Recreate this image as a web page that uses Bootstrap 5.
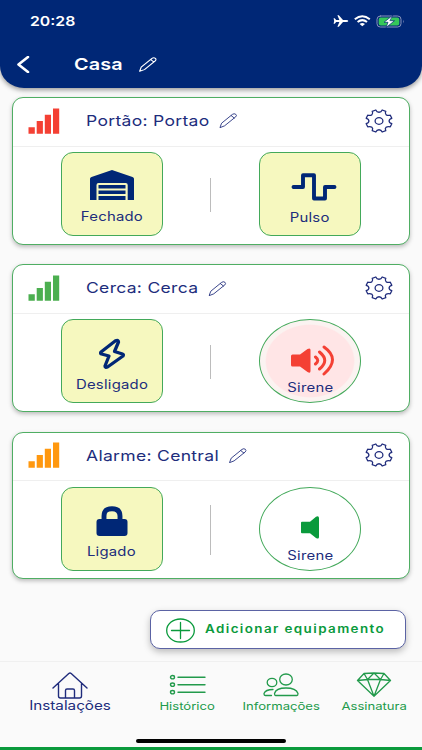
<!DOCTYPE html>
<html lang="pt-BR">
<head>
<meta charset="utf-8">
<meta name="viewport" content="width=device-width, initial-scale=1">
<title>Casa</title>
<link href="https://cdn.jsdelivr.net/npm/bootstrap@5.3.0/dist/css/bootstrap.min.css" rel="stylesheet">
<style>
:root{--navy:#002776;--ink:#202c7c;--green:#0a9a3c}
body{font-family:Inter,"Liberation Sans",sans-serif;background:#fafafa;color:var(--ink);line-height:1.2}
svg{display:block;flex:none;fill:none;stroke:currentColor;stroke-linecap:round;stroke-linejoin:round}
.screen{width:422px;height:750px}
.topbar{height:87.5px;background:var(--navy);border-radius:0 0 24px 24px/0 0 22px 22px;box-shadow:0 2px 5px rgba(0,0,0,.4)}
.status{height:42px;padding:0 17px 0 30px}
.clock{font-size:13.5px;font-weight:600;transform:scaleX(1.17)!important}
.wide{display:inline-block;transform:scaleX(1.2);transform-origin:left center;white-space:nowrap}
.mid{transform-origin:center}
.titlebar{height:44px;padding-left:16px}
.place{font-size:16.5px;font-weight:600;letter-spacing:.15px;margin-left:44px;padding-top:1px}
.gap-place{gap:13px}
.list{padding:9.5px 12.5px 0 12px;gap:19.8px}
.device{height:147.5px;border:1.2px solid #4fae63;border-radius:11px;background:#fff;box-shadow:0 2px 4px rgba(0,0,0,.25)}
.device-head{height:48.5px;border-bottom:1px solid #efefef;padding:0 15.5px 2px 15px}
.name{font-size:14.6px;letter-spacing:.26px;margin-left:26px;padding-top:2px}
.name svg{margin-top:-2px}
.gap-pen{gap:8.5px}
.body-row{padding-top:5.5px}
.tile{width:102px;height:84px;border:1.2px solid #43a95a;border-radius:12px;background:#f6f8bf;font-size:12.4px;letter-spacing:.2px}
.tile svg{color:var(--navy)}
.siren{border-radius:50%;background:#fff}
.siren.on{background:radial-gradient(closest-side,#ffe5e6 0 87%,#fbf3f1 90% 100%)}
.tile.on svg{color:#f44034}.tile.off svg{color:var(--green)}
.glyph{height:53.500px;padding-top:2px}
.bolt,.lock{padding-top:13px}
.glyph.garage{height:52.500px;padding-top:12px}
.glyph.pulse{height:53px;padding-top:14.500px}
.pulse + span{padding-top:1px}
.on .glyph{height:55.500px;padding-left:6px}
.on .glyph + span{margin-top:5.500px;padding-left:1px}
.off .glyph{height:53px;padding-bottom:1.500px}
.off .glyph + span{padding-left:1px}
.sep{width:1.3px;height:34px;background:#bcbcbc;margin-top:1.500px}
.sep.tall{height:50px;margin:0 0 -2px}
.add{width:255.5px;height:39px;margin:31px 16.5px 0 auto;border:1.3px solid #5b63a4;border-radius:10px;background:#fff;color:var(--green);box-shadow:0 3px 7px rgba(0,0,0,.25);padding:1px 0 0 14.5px}
.add .wide{font-size:11.2px;font-weight:600;letter-spacing:1.16px;margin-left:10px}
.tabs{height:88.5px;border-top:1.5px solid #f0f0f0;margin-top:12px;border-bottom:3px solid var(--green);color:#229a4b;position:relative;padding-top:10px}
.tabs>a{color:inherit;text-decoration:none;font-size:10.9px}
.tabs>a>.mid{padding-top:3px}
.tabs>a.here{color:var(--ink);font-size:12.7px}
.tabs>a.here>.mid{padding-top:0;margin-top:-1px}
.t1{width:140px}.t2{width:95px}.t3{width:92px}.t4{width:94px}
.homebar{position:absolute;left:136px;bottom:3.5px;width:150px;height:4.5px;border-radius:3px;background:#000}
</style>
<script src="https://cdn.jsdelivr.net/npm/bootstrap@5.3.0/dist/js/bootstrap.bundle.min.js"></script>
</head>
<body>
<svg width="0" height="0" class="position-absolute">
<symbol id="pen" viewBox="0 0 15 15"><path d="M.7 14.3 2 10.200 11 1.400Q12.500 .1 13.800 1.300 15 2.600 13.700 3.900L4.700 12.600ZM10 2.600 12.500 5"/></symbol>
<symbol id="bars" viewBox="0 0 32 26"><path stroke="none" fill="currentColor" d="M.5 19.3h6.3v6.4H.5zM8.7 13h6.2v12.700H8.700zM16.800 6.700H23v19h-6.200zM25 .5h6.200v25.200H25z"/></symbol>
<symbol id="gear" viewBox="0 0 28 24"><path d="M26.8 9.300C23.200 10.400 23.200 13.600 26.800 14.700L25.300 17.800C21.600 16.900 19.300 18.900 20.800 21.700L17.200 23C15.900 20 12.100 20 10.800 23L7.200 21.700C8.700 18.900 6.400 16.900 2.700 17.800L1.200 14.700C4.800 13.600 4.800 10.400 1.200 9.300L2.700 6.200C6.400 7.100 8.700 5.100 7.200 2.300L10.800 1C12.100 4 15.900 4 17.200 1L20.800 2.300C19.300 5.100 21.600 7.100 25.300 6.200Z"/><ellipse cx="14" cy="12" rx="3.900" ry="3.300"/></symbol>
</svg>
<div class="screen d-flex flex-column overflow-hidden">
<header class="topbar text-white flex-shrink-0">
  <div class="status d-flex align-items-center">
    <span class="clock wide">20:28</span>
    <div class="d-flex align-items-center ms-auto">
      <svg width="16" height="12" viewBox="0 0 16 12"><path fill="currentColor" stroke="none" d="M15.3 6Q15.3 7 13.2 7H10L5.8 11.7H4.4L6.4 7H3.2L1.7 8.8H.6L1.2 6 .6 3.2H1.7L3.2 5h3.2L4.4.3h1.4L10 5h3.2Q15.3 5 15.3 6Z"/></svg>
      <svg class="ms-1" width="19" height="12" viewBox="0 0 19 12"><g stroke-width="2" stroke-linecap="butt"><path d="M1.8 4.3Q9.3-1.7 16.8 4.3M4.6 7Q9.3 3.2 14 7"/></g><path stroke="none" fill="currentColor" d="M6.6 8.9Q9.3 6.9 12 8.9L9.3 11.3Z"/></svg>
      <svg class="ms-1" width="29" height="13" viewBox="0 0 29 13"><rect x="1" y="1" width="24" height="11" rx="3.3" stroke="#8894bd"/><rect x="2.7" y="2.5" width="20.6" height="8" rx="2" fill="#35c759" stroke="none"/><path d="M27 4.8Q28.4 6.5 27 8.2Z" fill="#8894bd" stroke="none"/><path d="M16.500 .5 8 7.300h4L10 12.600 18.500 5.700h-4.200Z" fill="#fff" stroke="#002776" stroke-width=".7"/></svg>
    </div>
  </div>
  <div class="titlebar d-flex align-items-center">
    <svg width="14" height="17" viewBox="0 0 14 17" stroke-width="2.600" stroke-linecap="butt" stroke-linejoin="miter"><path d="M12 1 2.500 8.500 12 16"/></svg>
    <div class="place wide"><span class="d-flex align-items-center gap-place">Casa<svg width="15" height="15" stroke-width="1"><use href="#pen"/></svg></span></div>
  </div>
</header>

<main class="list d-flex flex-column">
  <section class="device">
    <div class="device-head d-flex align-items-center">
      <svg width="32" height="26" color="#f44034"><use href="#bars"/></svg>
      <div class="name wide"><span class="d-flex align-items-center gap-pen">Portão: Portao<svg width="15" height="15" stroke-width=".8"><use href="#pen"/></svg></span></div>
      <svg class="ms-auto" width="28" height="24" stroke-width="1.300"><use href="#gear"/></svg>
    </div>
    <div class="d-flex justify-content-evenly align-items-center body-row">
      <div class="tile d-flex flex-column align-items-center">
        <div class="glyph garage d-flex align-items-center"><svg width="46" height="30" viewBox="0 0 46 30"><path fill="currentColor" stroke="none" d="M1 30V8.800Q1 7.500 2.500 7L23 0 43.500 7Q45 7.500 45 8.800V30H38.700V15Q38.700 13 36.700 13H9.500Q7.500 13 7.500 15V30ZM9.500 15H36.500V18.500H9.500ZM9.500 20.500H36.500V24H9.500ZM9.500 26H36.500V30H9.500Z"/></svg></div>
        <span class="wide mid mt-1">Fechado</span>
      </div>
      <div class="sep"></div>
      <div class="tile d-flex flex-column align-items-center">
        <div class="glyph pulse d-flex align-items-center ps-2"><svg width="46" height="28" viewBox="0 0 46 28" stroke-width="3.900"><path d="M2.500 14H12V2.300H23V25.500H34V14H43.500"/></svg></div>
        <span class="wide mid mt-1">Pulso</span>
      </div>
    </div>
  </section>

  <section class="device">
    <div class="device-head d-flex align-items-center">
      <svg width="32" height="26" color="#4caf50"><use href="#bars"/></svg>
      <div class="name wide"><span class="d-flex align-items-center gap-pen">Cerca: Cerca<svg width="15" height="15" stroke-width=".8"><use href="#pen"/></svg></span></div>
      <svg class="ms-auto" width="28" height="24" stroke-width="1.300"><use href="#gear"/></svg>
    </div>
    <div class="d-flex justify-content-evenly align-items-center body-row">
      <div class="tile d-flex flex-column align-items-center">
        <div class="glyph bolt d-flex align-items-center"><svg width="28" height="32" viewBox="0 0 28 32" stroke-width="3.300"><path d="M17.500 2.700 3 14Q2 15.500 3.500 16L11 18 7 28Q7 30 9.500 29L25 18Q26 16.500 24.500 16L16.500 13.500 20.500 4Q20.500 1.500 17.500 2.700Z"/></svg></div>
        <span class="wide mid mt-1">Desligado</span>
      </div>
      <div class="sep"></div>
      <div class="tile siren on d-flex flex-column align-items-center">
        <div class="glyph d-flex align-items-end"><svg width="45" height="31" viewBox="0 0 45 31"><path fill="currentColor" stroke="none" d="M2.500 9.500H10L17.500 4Q20.500 2.500 20.500 5V26Q20.500 29 17.500 27L10 21.500H2.500Q1 21.500 1 20V11Q1 9.500 2.500 9.500Z"/><path stroke-width="3" d="M25.500 12Q30 15.500 25.500 19M29.500 7Q40 15.500 29.500 24M34 2Q51 14 34 29"/></svg></div>
        <span class="wide mid">Sirene</span>
      </div>
    </div>
  </section>

  <section class="device">
    <div class="device-head d-flex align-items-center">
      <svg width="32" height="26" color="#ff980f"><use href="#bars"/></svg>
      <div class="name wide"><span class="d-flex align-items-center gap-pen">Alarme: Central<svg width="15" height="15" stroke-width=".8"><use href="#pen"/></svg></span></div>
      <svg class="ms-auto" width="28" height="24" stroke-width="1.300"><use href="#gear"/></svg>
    </div>
    <div class="d-flex justify-content-evenly align-items-center body-row">
      <div class="tile d-flex flex-column align-items-center">
        <div class="glyph lock d-flex align-items-center"><svg width="32" height="30" viewBox="0 0 32 30"><path d="M8 15V10Q8 2.700 16 2.700T24 10V15" stroke-width="4.900"/><rect x=".5" y="13" width="31" height="17" rx="3" fill="currentColor" stroke="none"/></svg></div>
        <span class="wide mid mt-1">Ligado</span>
      </div>
      <div class="sep tall"></div>
      <div class="tile siren off d-flex flex-column align-items-center">
        <div class="glyph d-flex align-items-end"><svg width="20" height="23" viewBox="0 0 20 22" preserveAspectRatio="none"><path fill="currentColor" stroke="none" d="M2 5.500H10L16 .7Q19 -.5 19 2V20Q19 22.500 16 21L10 16.500H2Q1 16.500 1 15.500V6.500Q1 5.500 2 5.500Z"/></svg></div>
        <span class="wide mid mt-2">Sirene</span>
      </div>
    </div>
  </section>
</main>

<button class="add d-flex align-items-center flex-shrink-0">
  <svg width="29" height="25" viewBox="0 0 29 25" stroke-width="1.300"><ellipse cx="14.500" cy="12.500" rx="13.800" ry="11.500"/><path d="M5.500 12.500h18M14.500 4.500v16"/></svg>
  <span class="wide">Adicionar equipamento</span>
</button>

<nav class="tabs d-flex flex-shrink-0">
  <a class="t1 here d-flex flex-column align-items-center" href="#"><svg width="36" height="27" viewBox="0 0 36 27" stroke-width="1.400"><path d="M1 16 16.800 1.500Q18 .5 19.200 1.500L35 16M6.500 12V24Q6.500 26 8.500 26H27.500Q29.500 26 29.500 24V12M13.500 26V18.500Q13.500 17 15 17H21Q22.500 17 22.500 18.500V26"/></svg><span class="wide mid">Instalações</span></a>
  <a class="t2 d-flex flex-column align-items-center" href="#"><svg width="37" height="25" viewBox="0 -2.700 37 25" stroke-width="1.400"><ellipse cx="3.500" cy="2.500" rx="2" ry="1.700"/><ellipse cx="3.500" cy="10" rx="2" ry="1.700"/><ellipse cx="3.500" cy="17.500" rx="2" ry="1.700"/><path d="M9 2.500h27M9 10h27M9 17.500h27"/></svg><span class="wide mid">Histórico</span></a>
  <a class="t3 d-flex flex-column align-items-center" href="#"><svg width="36" height="25" viewBox="0 0 36 25" stroke-width="1.300"><ellipse cx="23" cy="7.500" rx="6.300" ry="5.500"/><ellipse cx="9" cy="10.500" rx="4.800" ry="4.200"/><path d="M12.500 23.500Q11.500 23.500 11.500 21.500 13 16 23 16T35 21.500Q35 23.500 34 23.500ZM8.500 23.500H2.500Q1 23.500 1 21.500 2.500 17.500 10 17.500"/></svg><span class="wide mid">Informações</span></a>
  <a class="t4 d-flex flex-column align-items-center" href="#"><svg width="36" height="25" viewBox="0 0 36 25" stroke-width="1.300"><path d="M8 1.500 18 1 28 1.500 34.500 8.500 18 24.200 1.500 8.500ZM1.500 8.500 11.500 7.500H24.500L34.500 8.500M8 1.500 11.500 7.500 18 1 24.500 7.500 28 1.500M11.500 7.500 18 24.200 24.500 7.500"/></svg><span class="wide mid">Assinatura</span></a>
  <div class="homebar"></div>
</nav>
</div>
</body>
</html>
